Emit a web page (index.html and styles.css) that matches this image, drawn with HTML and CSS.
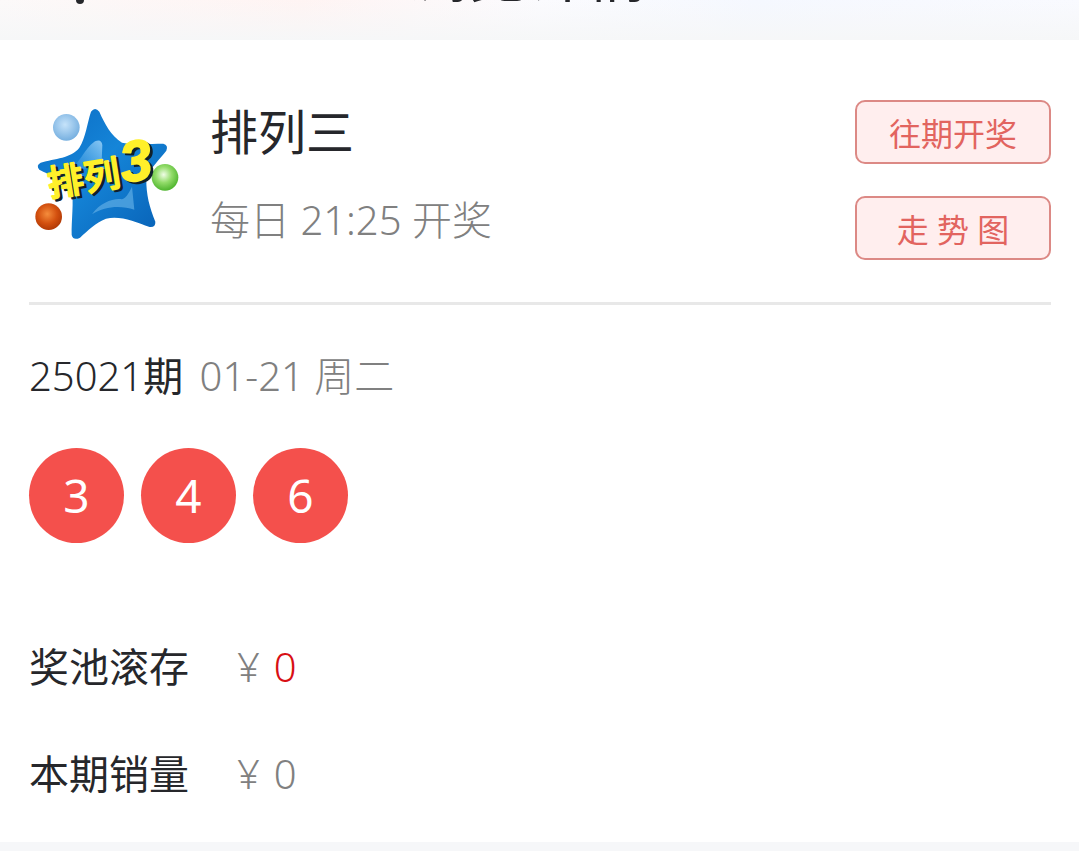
FILE: index.html
```html
<!DOCTYPE html>
<html lang="zh-CN">
<head>
    <meta charset="UTF-8">
    <meta name="viewport" content="width=device-width, initial-scale=1">
    <title>排列三</title>
    <link rel="stylesheet" href="styles.css">
</head>
<body>
    <header class="top">
        <span class="top-dot"></span>
        <h1 class="top-title">浏览详情</h1>
    </header>

    <main class="card">
        <section class="game">
            <svg class="logo" viewBox="27 30 459 420" role="img" aria-label="排列3">
                <defs>
                    <linearGradient id="star" x1="0" y1="0" x2="1" y2="1">
                        <stop offset="0" stop-color="#0a6ac2"/>
                        <stop offset=".45" stop-color="#1585d8"/>
                        <stop offset="1" stop-color="#075fb4"/>
                    </linearGradient>
                    <linearGradient id="shine" x1="0" y1="1" x2="1" y2="0">
                        <stop offset="0" stop-color="#4aa5e6" stop-opacity=".1"/>
                        <stop offset="1" stop-color="#8ac8f4"/>
                    </linearGradient>
                    <radialGradient id="blue" cx=".45" cy=".4" r=".6">
                        <stop offset="0" stop-color="#c6e3fa"/>
                        <stop offset="1" stop-color="#77b0e0"/>
                    </radialGradient>
                    <radialGradient id="green" cx=".45" cy=".4" r=".6">
                        <stop offset="0" stop-color="#f0fde6"/>
                        <stop offset=".5" stop-color="#93dc6a"/>
                        <stop offset="1" stop-color="#4fb52e"/>
                    </radialGradient>
                    <radialGradient id="orange" cx=".45" cy=".4" r=".6">
                        <stop offset="0" stop-color="#f58d3c"/>
                        <stop offset=".6" stop-color="#d3500f"/>
                        <stop offset="1" stop-color="#b23a06"/>
                    </radialGradient>
                </defs>
                <path fill="url(#star)" d="M213 50Q225 34 238 50C255 88 272 120 306 143C345 150 390 146 430 146Q446 150 439 167C419 193 391 218 379 251C378 298 389 338 406 380Q407 398 389 396C345 380 301 361 258 371C226 383 203 407 180 428Q160 438 155 420C154 375 162 320 155 282C127 252 88 240 58 224Q47 211 62 203C105 190 153 190 178 158C198 126 201 86 213 50Z"/>
                <path fill="url(#shine)" d="M150 218C180 210 188 165 225 139Q244 130 247 150L245 200L165 235Z"/>
                <path fill="#5aa9e3" opacity=".75" d="M216 358C242 322 280 309 306 313C322 306 328 290 336 275L343 344C302 331 256 333 216 358Z"/>
                <circle cx="139" cy="97" r="40" fill="url(#blue)"/>
                <circle cx="435" cy="247" r="40" fill="url(#green)"/>
                <circle cx="86" cy="365" r="40" fill="url(#orange)"/>
                <g class="logo-text" transform="rotate(-9 90 310)">
                    <g class="logo-shadow">
                        <text x="97 208" y="312" font-size="108">排列</text>
                        <text class="logo-num" x="321" y="305" font-size="172">3</text>
                    </g>
                    <text x="90 201" y="305" font-size="108">排列</text>
                    <text class="logo-num" x="314" y="298" font-size="172">3</text>
                </g>
            </svg>
            <div class="game-info">
                <h2 class="game-name">排列三</h2>
                <p class="game-time">每日 21:25 开奖</p>
            </div>
            <div class="game-btns">
                <button class="btn" type="button">往期开奖</button>
                <button class="btn" type="button">走 势 图</button>
            </div>
        </section>

        <section class="result">
            <p class="issue">25021<span class="unit">期</span> <span class="gray">01-21 周二</span></p>
            <ul class="balls">
                <li>3</li>
                <li>4</li>
                <li>6</li>
            </ul>
            <dl class="money">
                <dt>奖池滚存</dt>
                <dd><span>¥</span><span class="red">0</span></dd>
                <dt>本期销量</dt>
                <dd><span>¥</span><span>0</span></dd>
            </dl>
        </section>
    </main>
</body>
</html>
```
FILE: styles.css
```css
*{
    margin: 0;
    padding: 0;
    box-sizing: border-box;
}
body {
    background: #f6f7f9;
    color: #26272b;
    font-family: "Noto Sans", "Noto Sans CJK SC", sans-serif;
    font-size: 40px;
    font-weight: 300;
    line-height: 56px;
}
/* 顶部标题栏，滚动后只露出底边 */
.top {
    position: relative;
    display: flex;
    justify-content: center;
    align-items: flex-end;
    height: 40px;
    padding: 0 24px 28px 0;
    overflow: hidden;
    background: linear-gradient(to bottom, rgba(246,247,248,0), #f6f7f8), linear-gradient(to right, #fcf9f9, #fff4f3 28%, #fbfbfe 50%, #f5f8ff 70%, #f9faff);
}
.top-title {
    flex: none;
    font-size: 60px;
    font-weight: 400;
    line-height: 76px;
}
.top-dot {
    position: absolute;
    top: -5px;
    left: 76px;
    width: 8px;
    height: 9px;
    border-radius: 4px;
    background: #26272b;
}
.card {
    padding: 60px 28px 40px 29px;
    background: #fff;
}
.game {
    display: flex;
    align-items: flex-start;
    padding-bottom: 42px;
    border-bottom: 3px solid #e8e8e8;
}
.logo {
    flex: none;
    width: 153px;
    height: 140px;
    margin-top: 5px;
}
.logo-text {
    fill: #fff02a;
    stroke: #fff02a;
    stroke-width: 5;
    stroke-linejoin: round;
    font-family: "Noto Sans CJK SC", sans-serif;
    font-weight: 500;
}
.logo-num {
    font-family: "Liberation Sans", sans-serif;
    font-style: italic;
    font-weight: 700;
}
.logo-shadow {
    fill: #10202c;
    stroke: #10202c;
}
.game-info {
    flex: 1;
    padding-left: 28px;
}
.game-name {
    font-size: 48px;
    font-weight: 400;
    line-height: 64px;
}
.game-time {
    margin-top: 28px;
    color: #808080;
}
.game-btns {
    display: flex;
    flex-direction: column;
    gap: 32px;
}
.btn {
    width: 196px;
    height: 64px;
    border: 2px solid #dc8985;
    border-radius: 10px;
    background: #ffeeee;
    color: #e2645f;
    font-family: inherit;
    font-size: 32px;
    font-weight: 400;
    cursor: pointer;
}
.issue {
    margin-top: 43px;
}
.unit {
    font-weight: 400;
}
.gray {
    margin-left: 6px;
    color: #808080;
}
.balls {
    display: flex;
    gap: 17px;
    margin-top: 44px;
    list-style: none;
}
.balls li {
    width: 95px;
    height: 95px;
    border-radius: 50%;
    background: #f4504c;
    color: #fff;
    font-size: 46px;
    font-weight: 400;
    line-height: 95px;
    text-align: center;
}
.money {
    display: grid;
    grid-template-columns: auto 1fr;
    column-gap: 48px;
    row-gap: 51px;
    margin-top: 96px;
}
.money dt {
    font-weight: 400;
}
.money dd {
    display: flex;
    gap: 14px;
    color: #808080;
}
.money .red {
    color: #d80f14;
}
```
